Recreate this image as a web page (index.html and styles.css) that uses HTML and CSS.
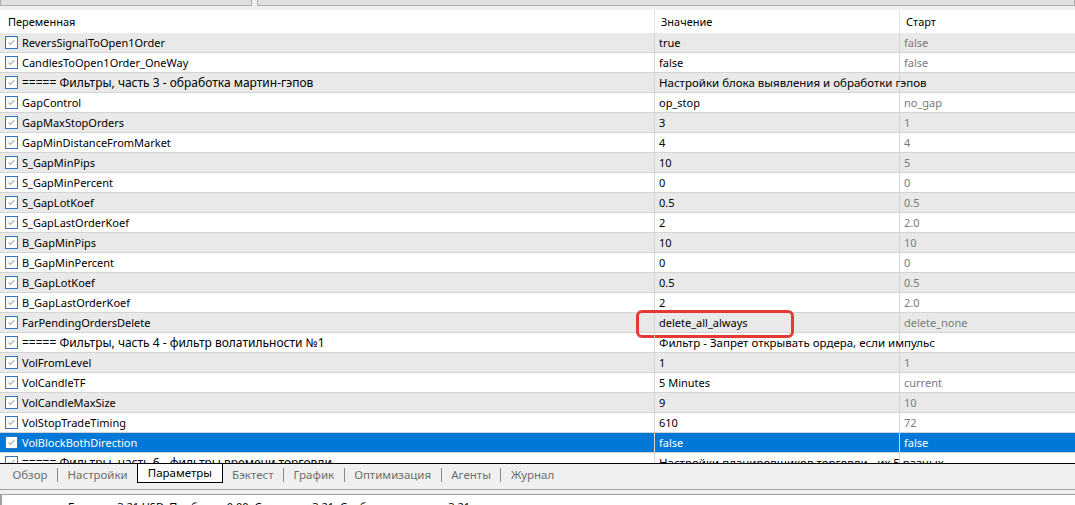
FILE: index.html
```html
<!DOCTYPE html>
<html lang="ru">
<head>
  <meta charset="UTF-8" />
  <title>Тестер стратегий - Параметры</title>
  <link rel="stylesheet" href="styles.css">
</head>
<body>
  <div class="top-strip">
    <div class="top-btn first"></div>
    <div class="top-btn second"></div>
  </div>

  <div class="params">
    <div class="row head">
      <div class="cell">Переменная</div>
      <div class="cell">Значение</div>
      <div class="cell">Старт</div>
    </div>

    <div class="row odd">
      <div class="cell name"><span class="cb"></span>ReversSignalToOpen1Order</div>
      <div class="cell">true</div>
      <div class="cell start">false</div>
    </div>
    <div class="row">
      <div class="cell name"><span class="cb"></span>CandlesToOpen1Order_OneWay</div>
      <div class="cell">false</div>
      <div class="cell start">false</div>
    </div>
    <div class="row odd group">
      <div class="cell name"><span class="cb"></span>===== Фильтры, часть 3 - обработка мартин-гэпов</div>
      <div class="cell wide">Настройки блока выявления и обработки гэпов</div>
      <div class="cell start"></div>
    </div>
    <div class="row">
      <div class="cell name"><span class="cb"></span>GapControl</div>
      <div class="cell">op_stop</div>
      <div class="cell start">no_gap</div>
    </div>
    <div class="row odd">
      <div class="cell name"><span class="cb"></span>GapMaxStopOrders</div>
      <div class="cell">3</div>
      <div class="cell start">1</div>
    </div>
    <div class="row">
      <div class="cell name"><span class="cb"></span>GapMinDistanceFromMarket</div>
      <div class="cell">4</div>
      <div class="cell start">4</div>
    </div>
    <div class="row odd">
      <div class="cell name"><span class="cb"></span>S_GapMinPips</div>
      <div class="cell">10</div>
      <div class="cell start">5</div>
    </div>
    <div class="row">
      <div class="cell name"><span class="cb"></span>S_GapMinPercent</div>
      <div class="cell">0</div>
      <div class="cell start">0</div>
    </div>
    <div class="row odd">
      <div class="cell name"><span class="cb"></span>S_GapLotKoef</div>
      <div class="cell">0.5</div>
      <div class="cell start">0.5</div>
    </div>
    <div class="row">
      <div class="cell name"><span class="cb"></span>S_GapLastOrderKoef</div>
      <div class="cell">2</div>
      <div class="cell start">2.0</div>
    </div>
    <div class="row odd">
      <div class="cell name"><span class="cb"></span>B_GapMinPips</div>
      <div class="cell">10</div>
      <div class="cell start">10</div>
    </div>
    <div class="row">
      <div class="cell name"><span class="cb"></span>B_GapMinPercent</div>
      <div class="cell">0</div>
      <div class="cell start">0</div>
    </div>
    <div class="row odd">
      <div class="cell name"><span class="cb"></span>B_GapLotKoef</div>
      <div class="cell">0.5</div>
      <div class="cell start">0.5</div>
    </div>
    <div class="row">
      <div class="cell name"><span class="cb"></span>B_GapLastOrderKoef</div>
      <div class="cell">2</div>
      <div class="cell start">2.0</div>
    </div>
    <div class="row odd">
      <div class="cell name"><span class="cb"></span>FarPendingOrdersDelete</div>
      <div class="cell">delete_all_always</div>
      <div class="cell start">delete_none</div>
    </div>
    <div class="row group">
      <div class="cell name"><span class="cb"></span>===== Фильтры, часть 4 - фильтр волатильности №1</div>
      <div class="cell wide">Фильтр - Запрет открывать ордера, если импульс</div>
      <div class="cell start"></div>
    </div>
    <div class="row odd">
      <div class="cell name"><span class="cb"></span>VolFromLevel</div>
      <div class="cell">1</div>
      <div class="cell start">1</div>
    </div>
    <div class="row">
      <div class="cell name"><span class="cb"></span>VolCandleTF</div>
      <div class="cell">5 Minutes</div>
      <div class="cell start">current</div>
    </div>
    <div class="row odd">
      <div class="cell name"><span class="cb"></span>VolCandleMaxSize</div>
      <div class="cell">9</div>
      <div class="cell start">10</div>
    </div>
    <div class="row">
      <div class="cell name"><span class="cb"></span>VolStopTradeTiming</div>
      <div class="cell">610</div>
      <div class="cell start">72</div>
    </div>
    <div class="row selected">
      <div class="cell name"><span class="cb"></span>VolBlockBothDirection</div>
      <div class="cell">false</div>
      <div class="cell start">false</div>
    </div>
    <div class="row group">
      <div class="cell name"><span class="cb"></span>===== Фильтры, часть 6 - фильтры времени торговли</div>
      <div class="cell wide">Настройки планировщиков торговли - их 5 разных</div>
      <div class="cell start"></div>
    </div>
  </div>

  <div class="tabs">
    <span class="tab">Обзор</span>
    <span class="tab">Настройки</span>
    <span class="tab active">Параметры</span>
    <span class="tab">Бэктест</span>
    <span class="tab">График</span>
    <span class="tab">Оптимизация</span>
    <span class="tab">Агенты</span>
    <span class="tab">Журнал</span>
  </div>

  <div class="status-gap"></div>
  <div class="status">Баланс:&nbsp;&nbsp;&nbsp;3.21 USD, Прибыль:&nbsp;&nbsp;0.00, Средства:&nbsp;&nbsp;3.21, Свободная маржа:&nbsp;&nbsp;&nbsp;3.21</div>

  <!-- красная рамка-пометка поверх значения -->
  <div class="mark"></div>
</body>
</html>
```

FILE: styles.css
```css
body {
  margin: 0;
  height: 505px;
  overflow: hidden;
  background: #ffffff;
  font-family: 'Noto Sans', 'Liberation Sans', sans-serif;
  font-size: 11px;
  color: #000;
  position: relative;
}

.top-strip {
  display: flex;
  gap: 5px;
  height: 10px;
  background: #f0f0f0;
}

.top-btn {
  height: 5px;
  background: #e1e1e1;
  border: 1px solid #adadad;
  border-top: none;
}

.top-btn.first {
  width: 250px;
}

.top-btn.second {
  flex: 1;
}

.params {
  height: 453px;
  overflow: hidden;
}

.row {
  display: grid;
  grid-template-columns: 654px 245px 1fr;
  height: 19px;
  border-bottom: 1px solid #d4d4d4;
  line-height: 19px;
  white-space: nowrap;
}

.row.odd {
  background: #e9e9e9;
}

.row.group {
  font-size: 11.5px;
}

.row.group .cell.name {
  font-size: 12px;
}

.row.head {
  height: 23px;
  line-height: 23px;
  border-bottom: none;
  background: #fff;
}

.cell {
  padding-left: 4px;
  border-left: 1px solid #d4d4d4;
  overflow: hidden;
}

.cell:first-child {
  border-left: none;
  padding-left: 5px;
}

/* текст описания группы заходит на колонку "Старт" */
.cell.wide {
  overflow: visible;
  position: relative;
  z-index: 1;
}

.head .cell {
  padding-left: 6px;
  border-left-color: #e6e6e6;
}

.head .cell:first-child {
  padding-left: 8px;
}

.cell.name {
  display: flex;
  align-items: center;
  gap: 4px;
}

.cell.start {
  color: #7a7a7a;
}

.cb {
  width: 11px;
  height: 11px;
  border: 1px solid #2f74c6;
  background: #fff url("data:image/svg+xml;utf8,<svg xmlns='http://www.w3.org/2000/svg' width='11' height='11'><polyline points='2.5,5.5 4.5,7.5 8.5,3' fill='none' stroke='%23b4b4b4' stroke-width='1.2'/></svg>") no-repeat center;
  flex: none;
}

.row.selected {
  background: #0078d7;
  color: #fff;
}

.row.selected .cell.start {
  color: #fff;
}

.tabs {
  display: flex;
  align-items: flex-start;
  height: 25px;
  background: #f0f0f0;
  border-top: 1px solid #000;
  color: #6d6d6d;
  padding-left: 3px;
  font-size: 11.5px;
}

.tab {
  padding: 0 9.5px;
  height: 14px;
  margin-top: 4px;
  line-height: 14px;
  border-left: 1px solid #888;
}

.tab:first-child {
  border-left: none;
}

.tab.active,
.tab.active + .tab {
  border-left: none;
}

.tab.active {
  margin-top: 0;
  height: 18px;
  line-height: 18px;
  background: #fff;
  color: #000;
  border: 1px solid #000;
  border-top: none;
}

.status-gap {
  height: 4px;
  background: #f0f0f0;
  border-top: 1px solid #a0a0a0;
}

.status {
  border-top: 1px solid #a0a0a0;
  border-left: 2px solid #a0a0a0;
  padding: 4px 0 0 66px;
  height: 20px;
  color: #000;
}

.mark {
  position: absolute;
  left: 636px;
  top: 310px;
  width: 152px;
  height: 22px;
  border: 3px solid #e53935;
  border-radius: 6px;
}
```
